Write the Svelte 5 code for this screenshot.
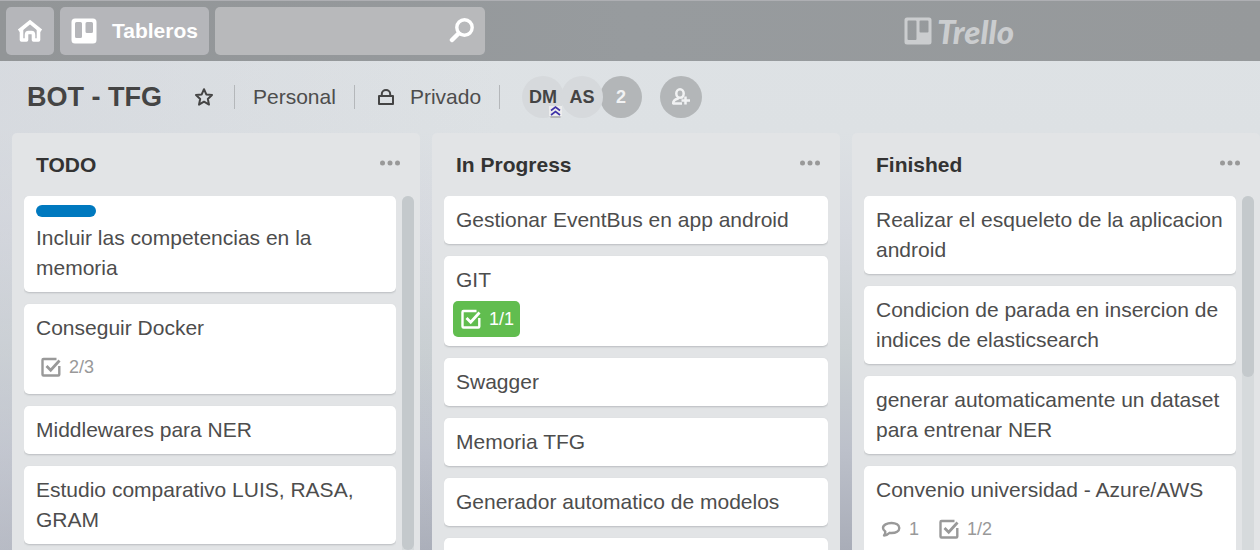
<script>
  const lists = [
    {
      title: 'TODO',
      thumb: 100,
      cards: [
        { text: 'Incluir las competencias en la memoria', label: true },
        { text: 'Conseguir Docker', badges: [{ icon: 'check', text: '2/3' }] },
        { text: 'Middlewares para NER' },
        { text: 'Estudio comparativo LUIS, RASA, GRAM' },
      ],
    },
    {
      title: 'In Progress',
      cards: [
        { text: 'Gestionar EventBus en app android' },
        { text: 'GIT', badges: [{ icon: 'check', text: '1/1', done: true }] },
        { text: 'Swagger' },
        { text: 'Memoria TFG' },
        { text: 'Generador automatico de modelos' },
        { text: '' },
      ],
    },
    {
      title: 'Finished',
      thumb: 51,
      cards: [
        { text: 'Realizar el esqueleto de la aplicacion android' },
        { text: 'Condicion de parada en insercion de indices de elasticsearch' },
        { text: 'generar automaticamente un dataset para entrenar NER' },
        {
          text: 'Convenio universidad - Azure/AWS',
          badges: [{ icon: 'comment', text: '1' }, { icon: 'check', text: '1/2' }],
        },
      ],
    },
  ];
</script>

<div class="page">
  <header class="topbar">
    <button class="tile home" aria-label="Inicio">
      <svg width="26" height="24" viewBox="0 0 26 24" fill="none" stroke="#fff" stroke-width="3.6" stroke-linejoin="round">
        <path d="M2 12 13 3 24 12" stroke-linejoin="miter" />
        <path d="M4.500 10v11h5V16q0-2.500 2-2.500h3q2 0 2 2.500v5h5V10" />
      </svg>
    </button>
    <button class="tile boards">
      <svg width="26" height="26" viewBox="0 0 26 26">
        <path fill="#fff" fill-rule="evenodd" d="M4 .5h18a3.500 3.500 0 0 1 3.500 3.500v18a3.500 3.500 0 0 1-3.500 3.500H4A3.500 3.500 0 0 1 .5 22V4A3.500 3.500 0 0 1 4 .5zM5.500 4q-1.500 0-1.500 1.500v13q0 1.500 1.500 1.500h4q1.500 0 1.500-1.500v-13Q11 4 9.500 4zM16 4q-1.500 0-1.500 1.500v8q0 1.500 1.500 1.500h4.500q1.500 0 1.500-1.500v-8Q22 4 20.500 4z" />
      </svg>
      <span>Tableros</span>
    </button>
    <label class="tile search">
      <input type="text" aria-label="Buscar" />
      <svg width="25" height="25" viewBox="0 0 25 25" fill="none" stroke="#fff">
        <circle cx="15.500" cy="9.500" r="7.700" stroke-width="3.400" />
        <path d="M9.500 15.500 3 22" stroke-width="4.500" stroke-linecap="round" />
      </svg>
    </label>
    <a class="brand" href="#home">
      <svg width="28" height="28" viewBox="0 0 28 28">
        <path fill="currentColor" fill-rule="evenodd" d="M3 .5h22A2.500 2.500 0 0 1 27.500 3v22a2.500 2.500 0 0 1-2.500 2.500H3A2.500 2.500 0 0 1 .5 25V3A2.500 2.500 0 0 1 3 .5zM4.500 3.500q-1 0-1 1V22q0 1 1 1h7q1 0 1-1V4.500q0-1-1-1zM16.500 3.500q-1 0-1 1V14.500q0 1 1 1h7q1 0 1-1V4.500q0-1-1-1z" />
      </svg>
      <span>Trello</span>
    </a>
  </header>

  <div class="boardbar">
    <h1>BOT - TFG</h1>
    <button class="plain star" aria-label="Favorito">
      <svg width="20" height="20" viewBox="0 0 20 20" fill="none" stroke="currentColor" stroke-width="2" stroke-linejoin="round">
        <path d="M10 2.200 12.300 7.400 18 8 13.800 11.900 15 17.600 10 14.700 5 17.600 6.200 11.900 2 8 7.700 7.400z" />
      </svg>
    </button>
    <i class="divider"></i>
    <button class="plain team">Personal</button>
    <i class="divider"></i>
    <button class="plain privacy">
      <svg width="16" height="16" viewBox="0 0 16 16" fill="none" stroke="currentColor" stroke-width="2" stroke-linejoin="round">
        <path d="M1 7h14v8H1zM3.800 7V5a4.200 4 0 0 1 8.400 0v2" />
      </svg>
      Privado
    </button>
    <i class="divider"></i>
    <div class="members">
      <span class="avatar">DM
        <svg class="admin" width="13" height="13" viewBox="0 0 13 13" fill="none">
          <path d="M0 1h13v10H0z" fill="#ededed" />
          <path d="M1.500 12h10" stroke="#aaa" stroke-width="1.500" />
          <path d="M2 5.500 6.500 2 11 5.500M2 10 6.500 6.500 11 10" stroke="#3d31a8" stroke-width="1.600" />
        </svg>
      </span>
      <span class="avatar">AS</span>
      <button class="avatar more">2</button>
    </div>
    <button class="avatar invite" aria-label="Invitar">
      <svg width="20" height="18" viewBox="0 0 20 18" fill="none" stroke="#f1f2f3" stroke-width="2.500" stroke-linejoin="round">
        <path d="M11 15.500H2.200C2 12.800 3.800 11.500 7 10.500V9M11 10.500V9" />
        <ellipse cx="9" cy="5.500" rx="3.700" ry="4.200" />
        <path d="M14.500 8.500v8M10.500 12.500h8.500" />
      </svg>
    </button>
  </div>

  <main class="lists">
    {#each lists as list}
      <section class="list">
        <div class="listhead">
          <h2>{list.title}</h2>
          <button class="plain dots" aria-label="Acciones">
            <svg width="20" height="6" viewBox="0 0 20 6" fill="currentColor">
              <circle cx="2.500" cy="3" r="2.500" /><circle cx="10" cy="3" r="2.500" /><circle cx="17.500" cy="3" r="2.500" />
            </svg>
          </button>
        </div>
        <div class="listbody">
          <div class="cards">
            {#each list.cards as card}
              <article class="card">
                {#if card.label}<div class="label"></div>{/if}
                <p>{card.text}</p>
                {#if card.badges}
                  <div class="badges">
                    {#each card.badges as badge}
                      <span class="badge" class:done={badge.done}>
                        {#if badge.icon === 'check'}
                          <svg width="20" height="20" viewBox="0 0 20 20" fill="none" stroke="currentColor" stroke-width="2.400" stroke-linejoin="round">
                            <path d="M15.500 2H2.500q-1 0-1 1v14.500q0 1 1 1h14.800q1 0 1-1V9" />
                            <path d="M5.500 9l4.200 4.200L18.500 3.500" stroke-width="2.800" stroke-linejoin="miter" />
                          </svg>
                        {:else}
                          <svg width="20" height="20" viewBox="0 0 20 20" fill="none" stroke="currentColor" stroke-width="2.400" stroke-linejoin="round">
                            <path d="M10.500 4C15 4 18.300 6 18.300 9S15 14 10.500 14q-1 0-1.800-.2Q6.500 16.200 3 16.500q1.500-1.800 1.300-4Q2 11 2 9C2 6 6 4 10.500 4z" />
                          </svg>
                        {/if}
                        {badge.text}
                      </span>
                    {/each}
                  </div>
                {/if}
              </article>
            {/each}
          </div>
          {#if list.thumb}
            <div class="track"><div class="thumb" style="height: {list.thumb}%"></div></div>
          {/if}
        </div>
      </section>
    {/each}
  </main>
</div>

<style>
  :global(body) {
    margin: 0;
    font-family: "Liberation Sans", Arial, sans-serif;
    font-size: 21px;
    line-height: 30px;
    color: #4d4d4d;
  }
  .page {
    height: 100vh;
    display: flex;
    flex-direction: column;
    overflow: hidden;
    background:
      linear-gradient(90deg, rgba(205, 208, 216, 0.4), transparent 40%),
      linear-gradient(180deg, #dee2e5 0%, #dde1e4 24%, #d6d9df 42%, #c9cfd2 64%, #bcc0ca 82%, #a9adb8 100%);
  }
  button, input {
    font: inherit;
    color: inherit;
    border: 0;
    padding: 0;
    background: none;
  }
  svg { display: block; flex: none; }
  h1, h2, p { margin: 0; }
  .topbar {
    flex: none;
    box-sizing: border-box;
    height: 61px;
    padding: 5px 6px 6px;
    display: flex;
    align-items: center;
    gap: 6px;
    background: linear-gradient(90deg, #929597, #979b9e 50%, #96999b);
    border-top: 1px solid #aeafb3;
  }
  .tile {
    box-sizing: border-box;
    height: 48px;
    border-radius: 5px;
    background: #b5b6ba;
    display: flex;
    align-items: center;
    color: #fff;
  }
  .home { width: 48px; justify-content: center; }
  .boards { padding: 0 11px; gap: 15px; font-weight: bold; }
  .search { width: 270px; padding-right: 11px; background: #b8b9bb; }
  .search input { flex: 1; min-width: 0; height: 100%; outline: none; }
  .brand {
    margin-left: auto;
    margin-right: 240px;
    display: flex;
    align-items: center;
    gap: 5px;
    color: #cbcdcf;
    text-decoration: none;
    font: italic 900 33px/30px Lato, sans-serif;
  }
  .boardbar {
    flex: none;
    height: 72px;
    padding-left: 27px;
    display: flex;
    align-items: center;
    color: #4d4d4d;
  }
  h1 { font-size: 27px; font-weight: bold; color: #444; }
  .star { margin: 0 20px 0 32px; color: #444; }
  .divider { width: 1px; height: 24px; background: #b4b7ba; }
  .team { margin: 0 18px; }
  .privacy { display: flex; align-items: center; gap: 16px; margin: 0 18px 0 23px; }
  .privacy svg { color: #444; }
  .members { display: flex; margin: 0 18px 0 22px; }
  .avatar {
    position: relative;
    width: 42px;
    height: 42px;
    border-radius: 50%;
    background: #d6d9dc;
    display: flex;
    align-items: center;
    justify-content: center;
    font-size: 18px;
    font-weight: bold;
    color: #444;
    z-index: 1;
  }
  .avatar + .avatar { margin-left: -3px; }
  .avatar.more { color: #f1f2f3; background: #b3b6b8; z-index: 0; }
  .avatar.invite { background: #b3b6b8; }
  .admin { position: absolute; right: 2px; bottom: 0; }
  .lists {
    flex: 1;
    min-height: 0;
    display: flex;
    gap: 12px;
    padding-left: 12px;
  }
  .list {
    flex: 0 0 408px;
    display: flex;
    flex-direction: column;
    min-height: 0;
    background: #e2e4e6;
    border-radius: 5px 5px 0 0;
  }
  .listhead {
    flex: none;
    height: 63px;
    box-sizing: border-box;
    padding: 0 20px 0 24px;
    display: flex;
    align-items: center;
    justify-content: space-between;
  }
  h2 { font-size: 21px; font-weight: bold; color: #333; }
  .dots { color: #999; padding-bottom: 4px; }
  .listbody {
    flex: 1;
    min-height: 0;
    display: flex;
    gap: 6px;
    padding: 0 6px 0 12px;
  }
  .list:nth-child(2) .listbody { padding-right: 12px; }
  .cards {
    flex: 1;
    min-width: 0;
    overflow: hidden;
    display: flex;
    flex-direction: column;
    gap: 12px;
  }
  .card {
    flex: none;
    min-height: 30px;
    padding: 9px 12px;
    background: #fff;
    border-radius: 5px;
    box-shadow: 0 1px 2px #b9bcbf;
  }
  .label {
    width: 60px;
    height: 12px;
    margin-bottom: 6px;
    border-radius: 6px;
    background: #0079bf;
  }
  .badges { display: flex; gap: 6px; margin: 6px 0 0 -3px; }
  .badge {
    height: 36px;
    padding: 0 6px 0 8px;
    display: flex;
    align-items: center;
    gap: 8px;
    border-radius: 5px;
    font-size: 18px;
    color: #999;
  }
  .done { background: #61bd4f; color: #fff; }
  .track { flex: none; width: 12px; border-radius: 6px 6px 0 0; background: #d6dadc; }
  .thumb { background: #c4c9cc; border-radius: 6px; }
</style>
